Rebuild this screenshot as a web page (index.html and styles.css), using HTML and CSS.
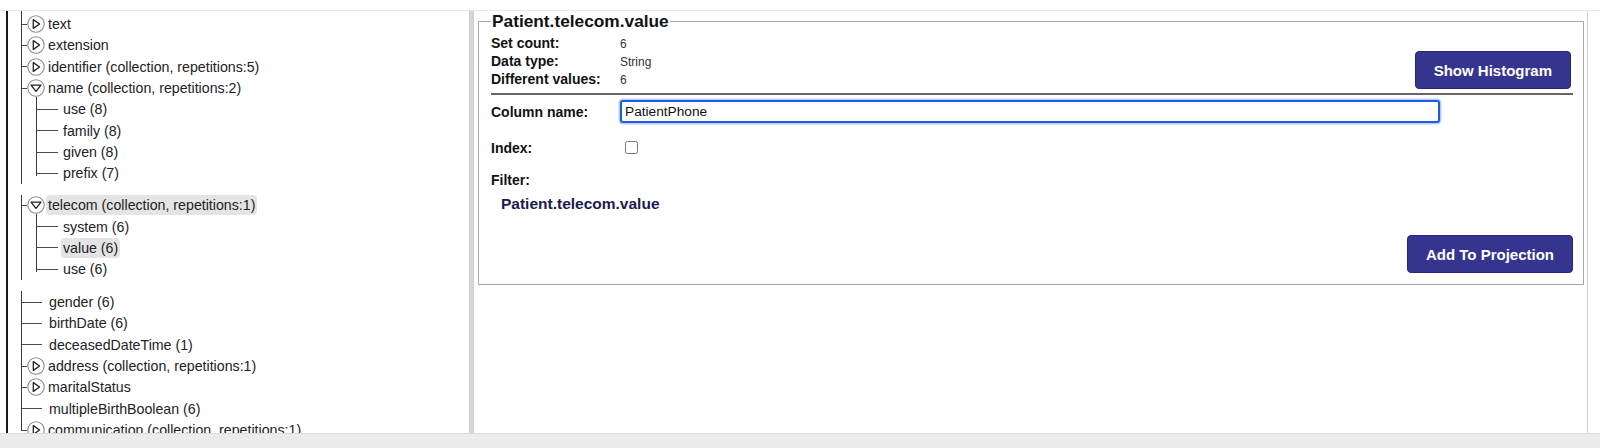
FILE: index.html
```html
<!DOCTYPE html>
<html lang="en">
<head>
<meta charset="utf-8">
<title>Patient.telecom.value</title>
<link rel="stylesheet" href="styles.css">
</head>
<body>
<div class="app">
  <div class="topbar"></div>
  <div class="main">
    <div class="left">
      <div class="rail"></div>
      <div class="tree">
        <ul class="branch lvl1">
          <li><div class="row"><span class="hl"></span><svg class="tog" width="18" height="18" viewBox="0 0 18 18"><circle cx="9" cy="9" r="8.2" fill="#fff" stroke="#8c8c8c" stroke-width="1.1"/><path d="M6.3 4.6 L12.6 9 L6.3 13.4 Z" fill="#fff" stroke="#222" stroke-width="1.3" stroke-linejoin="round"/></svg><span class="lbl">text</span></div></li>
          <li><div class="row"><span class="hl"></span><svg class="tog" width="18" height="18" viewBox="0 0 18 18"><circle cx="9" cy="9" r="8.2" fill="#fff" stroke="#8c8c8c" stroke-width="1.1"/><path d="M6.3 4.6 L12.6 9 L6.3 13.4 Z" fill="#fff" stroke="#222" stroke-width="1.3" stroke-linejoin="round"/></svg><span class="lbl">extension</span></div></li>
          <li><div class="row"><span class="hl"></span><svg class="tog" width="18" height="18" viewBox="0 0 18 18"><circle cx="9" cy="9" r="8.2" fill="#fff" stroke="#8c8c8c" stroke-width="1.1"/><path d="M6.3 4.6 L12.6 9 L6.3 13.4 Z" fill="#fff" stroke="#222" stroke-width="1.3" stroke-linejoin="round"/></svg><span class="lbl">identifier (collection, repetitions:5)</span></div></li>
          <li>
            <div class="row"><span class="hl"></span><svg class="tog" width="18" height="18" viewBox="0 0 18 18"><circle cx="9" cy="9" r="8.2" fill="#fff" stroke="#8c8c8c" stroke-width="1.1"/><path d="M4 6.2 L14 6.2 L9 12.4 Z" fill="#fff" stroke="#222" stroke-width="1.3" stroke-linejoin="round"/></svg><span class="lbl">name (collection, repetitions:2)</span></div>
            <ul class="branch lvl2">
              <li><div class="row"><span class="hl"></span><span class="lbl">use (8)</span></div></li>
              <li><div class="row"><span class="hl"></span><span class="lbl">family (8)</span></div></li>
              <li><div class="row"><span class="hl"></span><span class="lbl">given (8)</span></div></li>
              <li><div class="row"><span class="hl"></span><span class="lbl">prefix (7)</span></div></li>
            </ul>
          </li>
          <li>
            <div class="row sel"><span class="hl"></span><svg class="tog" width="18" height="18" viewBox="0 0 18 18"><circle cx="9" cy="9" r="8.2" fill="#fff" stroke="#8c8c8c" stroke-width="1.1"/><path d="M4 6.2 L14 6.2 L9 12.4 Z" fill="#fff" stroke="#222" stroke-width="1.3" stroke-linejoin="round"/></svg><span class="lbl">telecom (collection, repetitions:1)</span></div>
            <ul class="branch lvl2 lvl2-b">
              <li><div class="row"><span class="hl"></span><span class="lbl">system (6)</span></div></li>
              <li><div class="row sel"><span class="hl"></span><span class="lbl">value (6)</span></div></li>
              <li><div class="row"><span class="hl"></span><span class="lbl">use (6)</span></div></li>
            </ul>
          </li>
          <li class="leaf"><div class="row"><span class="hl"></span><span class="lbl">gender (6)</span></div></li>
          <li class="leaf"><div class="row"><span class="hl"></span><span class="lbl">birthDate (6)</span></div></li>
          <li class="leaf"><div class="row"><span class="hl"></span><span class="lbl">deceasedDateTime (1)</span></div></li>
          <li><div class="row"><span class="hl"></span><svg class="tog" width="18" height="18" viewBox="0 0 18 18"><circle cx="9" cy="9" r="8.2" fill="#fff" stroke="#8c8c8c" stroke-width="1.1"/><path d="M6.3 4.6 L12.6 9 L6.3 13.4 Z" fill="#fff" stroke="#222" stroke-width="1.3" stroke-linejoin="round"/></svg><span class="lbl">address (collection, repetitions:1)</span></div></li>
          <li><div class="row"><span class="hl"></span><svg class="tog" width="18" height="18" viewBox="0 0 18 18"><circle cx="9" cy="9" r="8.2" fill="#fff" stroke="#8c8c8c" stroke-width="1.1"/><path d="M6.3 4.6 L12.6 9 L6.3 13.4 Z" fill="#fff" stroke="#222" stroke-width="1.3" stroke-linejoin="round"/></svg><span class="lbl">maritalStatus</span></div></li>
          <li class="leaf"><div class="row"><span class="hl"></span><span class="lbl">multipleBirthBoolean (6)</span></div></li>
          <li><div class="row"><span class="hl"></span><svg class="tog" width="18" height="18" viewBox="0 0 18 18"><circle cx="9" cy="9" r="8.2" fill="#fff" stroke="#8c8c8c" stroke-width="1.1"/><path d="M6.3 4.6 L12.6 9 L6.3 13.4 Z" fill="#fff" stroke="#222" stroke-width="1.3" stroke-linejoin="round"/></svg><span class="lbl">communication (collection, repetitions:1)</span></div></li>
        </ul>
      </div>
    </div>
    <div class="splitter"></div>
    <div class="right">
      <fieldset class="detail">
        <legend>Patient.telecom.value</legend>
        <div class="head">
          <dl class="stats">
            <dt>Set count:</dt><dd>6</dd>
            <dt>Data type:</dt><dd>String</dd>
            <dt>Different values:</dt><dd>6</dd>
          </dl>
          <button class="btn btn-hist" type="button">Show Histogram</button>
        </div>
        <hr class="sep">
        <div class="form">
          <label class="flabel" for="colname">Column name:</label>
          <div><input id="colname" class="text-input" type="text" value="PatientPhone"></div>
          <label class="flabel shift" for="idx">Index:</label>
          <div class="shift"><input id="idx" class="chk" type="checkbox"></div>
          <div class="flabel">Filter:</div>
          <div></div>
        </div>
        <div class="filter-val">Patient.telecom.value</div>
        <div class="actions"><button class="btn" type="button">Add To Projection</button></div>
      </fieldset>
    </div>
    <div class="gutter"></div>
  </div>
  <div class="hscroll"></div>
</div>
</body>
</html>
```

FILE: styles.css
```css
* { box-sizing: border-box; }

html, body {
  margin: 0;
  padding: 0;
  background: #fff;
}

body {
  font-family: "Liberation Sans", Arial, sans-serif;
  color: #111;
  width: 1600px;
  height: 448px;
  overflow: hidden;
}

.app {
  display: flex;
  flex-direction: column;
  height: 448px;
}

.topbar {
  height: 11px;
  flex: none;
  border-bottom: 1px solid #e8e8e8;
}

.main {
  display: flex;
  height: 422px;
  flex: none;
}

/* ---------- left tree ---------- */
.left {
  width: 469px;
  flex: none;
  display: flex;
  overflow: hidden;
  background: #fff;
}

.rail {
  width: 2px;
  margin-left: 6px;
  background: #1a1a1a;
  flex: none;
}

.tree {
  flex: 1;
  padding-top: 2.5px;
  font-size: 14.2px;
  color: #222;
}

.branch {
  list-style: none;
  margin: 0;
  padding: 0;
}

.branch > li {
  position: relative;
}

.branch > li::before {
  content: "";
  position: absolute;
  top: 0;
  bottom: 0;
  border-left: 1px solid #3c3c3c;
}

.branch > li:last-child::before {
  bottom: auto;
  height: 11px;
}

.row {
  display: flex;
  align-items: center;
  height: 21.33px;
  white-space: nowrap;
}

.hl {
  display: block;
  height: 0;
  border-top: 1px solid #4a4a4a;
  flex: none;
}

.tog {
  display: block;
  flex: none;
}

.lbl {
  display: block;
  line-height: 20px;
  padding: 0 2px;
  margin-left: 1px;
  border-radius: 4px;
}

.sel .lbl {
  background: #e4e4e4;
}

/* level 1 */
.lvl1 > li::before { left: 13px; }
.lvl1 > li:first-child::before { top: -4px; }
.lvl1 > li > .row { padding-left: 13px; }
.lvl1 > li > .row > .hl { width: 6px; }
.lvl1 > li.leaf > .row > .hl { width: 21px; }
.lvl1 > li.leaf > .row > .lbl { margin-left: 5px; }

/* level 2 */
.lvl2 { margin-bottom: 10.5px; }
.lvl2-b { margin-bottom: 11.5px; }
.lvl2 > li::before { left: 28px; }
.lvl2 > li:first-child::before { top: -2px; }
.lvl2 > li:last-child::before { height: 13px; }
.lvl2 > li > .row { padding-left: 28px; }
.lvl2 > li > .row > .hl { width: 22px; }
.lvl2 > li > .row > .lbl { margin-left: 3px; }

/* ---------- splitter ---------- */
.splitter {
  width: 5px;
  flex: none;
  background: #d6d6d6;
  border-left: 1px solid #cfcfcf;
  border-right: 1px solid #cfcfcf;
}

/* ---------- right panel ---------- */
.right {
  width: 1114px;
  flex: none;
  padding: 0 3px 0 4px;
  border-right: 1px solid #d2d2d2;
}

.gutter {
  flex: 1;
}

.detail {
  margin: 0;
  min-width: 0;
  border: 1px solid #a8a8a8;
  padding: 4px 10px 11px 12px;
}

.detail legend {
  padding: 0 1px;
  font-size: 17.3px;
  font-weight: bold;
  line-height: 20px;
  color: #111;
}

.head {
  display: flex;
  justify-content: space-between;
  align-items: flex-end;
}

.stats {
  display: grid;
  grid-template-columns: 129px auto;
  align-items: baseline;
  line-height: 17px;
  margin: 0;
}

.stats dt {
  font-size: 14px;
  font-weight: bold;
  color: #111;
}

.stats dd {
  margin: 0;
  font-size: 12px;
  color: #333;
}

.btn {
  height: 38px;
  padding: 0 18px;
  font-family: "Liberation Sans", Arial, sans-serif;
  font-size: 15px;
  font-weight: bold;
  color: #fff;
  background: #35358f;
  border: 1px solid #26267a;
  border-radius: 4px;
}

.btn-hist {
  margin-right: 2px;
}

.sep {
  margin: 4px 0 0;
  height: 0;
  border: 0;
  border-top: 2px solid #676767;
}

.form {
  display: grid;
  grid-template-columns: 129px 1fr;
  grid-template-rows: 23px 27px 23px;
  row-gap: 9px;
  align-items: center;
  margin-top: 5px;
}

.flabel {
  font-size: 14px;
  font-weight: bold;
  color: #111;
}

.form > div {
  display: flex;
  align-items: center;
}

.form > .shift {
  padding-top: 4px;
}

.text-input {
  width: 820px;
  height: 23px;
  padding: 0 3px;
  font-family: "Liberation Sans", Arial, sans-serif;
  font-size: 13.7px;
  color: #111;
  border: 2px solid #1f5ce0;
  border-radius: 3px;
  box-shadow: 0 0 0 1.5px #b8cdf5;
  outline: none;
}

.chk {
  width: 13px;
  height: 13px;
  margin: 0 0 0 5px;
}

.filter-val {
  margin-top: 3px;
  padding-left: 10px;
  font-size: 15.5px;
  font-weight: bold;
  line-height: 20px;
  color: #1c1c50;
}

.actions {
  display: flex;
  justify-content: flex-end;
  margin-top: 21px;
}

/* ---------- bottom scroll band ---------- */
.hscroll {
  height: 15px;
  flex: none;
  background: #ececec;
  border-top: 1px solid #dcdcdc;
}
```
